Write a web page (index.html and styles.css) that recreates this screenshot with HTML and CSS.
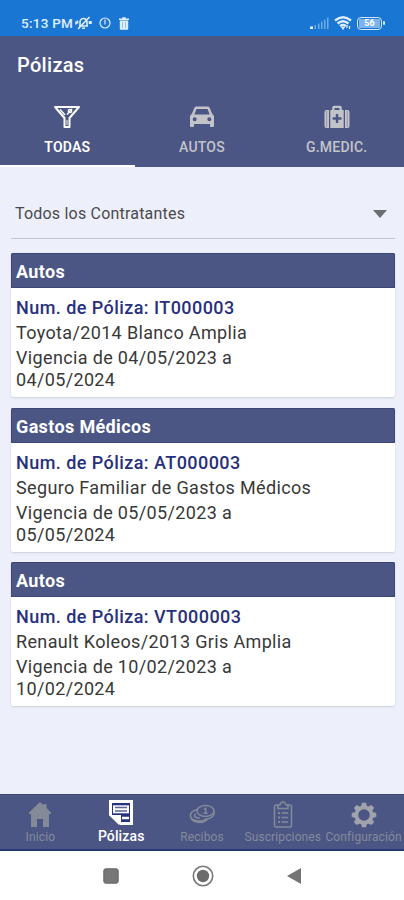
FILE: index.html
```html
<!DOCTYPE html>
<html lang="es">
<head>
<meta charset="utf-8">
<title>Pólizas</title>
<link rel="stylesheet" href="styles.css">
</head>
<body>
<div class="status">
  <span class="time">5:13 PM</span>
  <svg class="mute" width="17" height="14" viewBox="0 0 17 14" fill="none" stroke="currentColor" stroke-width="1.6"><path d="M4 10h9M5 10V6a3.500 3.500 0 0 1 7 0v4M7 12.300h3M14.500 1L3 13M1 5.500v3M16 5v3M2.500 4.500v3M14.500 5v3"/></svg>
  <svg class="alarm" width="12" height="12" viewBox="0 0 12 12" fill="none" stroke="currentColor" stroke-width="1.2"><circle cx="6" cy="6" r="5"/><path d="M6 2.500v5"/></svg>
  <svg class="trash" width="10" height="13" viewBox="0 0 10 13" fill="currentColor"><path d="M0 1.500h3L3.500.3h3L7 1.500h3V3H0zM.8 3.600h8.400V12q0 .8-.8.8H1.600q-.8 0-.8-.8z"/><path d="M3.500 5v6M6.500 5v6" stroke="#7bb3ea" stroke-width=".7"/></svg>
  <svg class="signal" width="19" height="13" viewBox="0 0 19 13" fill="#6faae5"><path d="M0 12V9.500h3V12z" fill="#e8f2ff"/><path d="M4.500 8H6v4H4.500zM8 6.500h1.500V12H8zM11 4.500h1.500V12H11zM14 2.500h1.500V12H14zM17 .5h1.500V12H17z"/></svg>
  <svg class="wifi" width="18" height="14" viewBox="0 0 18 14" fill="none" stroke="currentColor" stroke-width="2.300"><path d="M1 4.500q8-6.500 16 0M3.500 7.500q5.500-4.500 11 0M6 10.200q3-2.400 6 0"/><path d="M8 11.500h2L9 13zM13 9v3M15.500 10v3" stroke-width="1.300"/></svg>
  <span class="battery"><span class="level">56</span></span>
</div>
<header class="appbar">
  <h1>Pólizas</h1>
  <nav class="tabs">
    <a class="tab active">
      <svg width="28" height="24" viewBox="0 0 28 24" fill="none" stroke="currentColor" stroke-width="2"><path d="M2 2h24l-9.500 11v9h-5v-9z" stroke-linejoin="round"/><path d="M7 4.500l5 5.500M19 4l-5 5.500" stroke-width="1.500"/><circle cx="17" cy="6" r="1.700" stroke-width="1.300"/><path d="M14 15v5" stroke-width="1"/></svg>
      <span>TODAS</span>
    </a>
    <a class="tab">
      <svg width="26" height="24" viewBox="0 0 26 24" fill="currentColor" fill-rule="evenodd"><path d="M5.500 2.500Q6 1.500 7.500 1.500h11q1.500 0 2 1L23 8.500l2 2.500v10q0 1-1 1h-2q-1 0-1-1v-2H5v2q0 1-1 1H2q-1 0-1-1V11l2-2.500zM7.500 4L5.300 9.500h15.400L18.500 4zM5.700 12.200a2 2 0 1 0 0 4 2 2 0 0 0 0-4zM20.300 12.200a2 2 0 1 0 0 4 2 2 0 0 0 0-4z"/></svg>
      <span>AUTOS</span>
    </a>
    <a class="tab">
      <svg width="26" height="24" viewBox="0 0 26 24" fill="currentColor" fill-rule="evenodd"><path d="M6.300 5h1.900V2.500Q8.200.8 10 .8h6q1.800 0 1.800 1.700V5h1.900v18H6.300zM10.500 3v2h5V3zM11.800 9v3.200H8.600v2.500h3.200v3.200h2.500v-3.200h3.200v-2.500h-3.200V9z"/><path d="M5 5v18H2.500Q.5 23 .5 21V7q0-2 2-2zM21 5h2.500q2 0 2 2v14q0 2-2 2H21z"/><path d="M2.700 6v16M23.300 6v16" stroke="#7f84a1" stroke-width=".7"/></svg>
      <span>G.MEDIC.</span>
    </a>
  </nav>
</header>
<main>
  <div class="select"><span>Todos los Contratantes</span><i class="caret"></i></div>
  <section class="card">
    <h2>Autos</h2>
    <div class="body">
      <h3>Num. de Póliza: IT000003</h3>
      <p class="desc">Toyota/2014 Blanco Amplia</p>
      <p class="dates">Vigencia de 04/05/2023 a<br>04/05/2024</p>
    </div>
  </section>
  <section class="card">
    <h2>Gastos Médicos</h2>
    <div class="body">
      <h3>Num. de Póliza: AT000003</h3>
      <p class="desc">Seguro Familiar de Gastos Médicos</p>
      <p class="dates">Vigencia de 05/05/2023 a<br>05/05/2024</p>
    </div>
  </section>
  <section class="card">
    <h2>Autos</h2>
    <div class="body">
      <h3>Num. de Póliza: VT000003</h3>
      <p class="desc">Renault Koleos/2013 Gris Amplia</p>
      <p class="dates">Vigencia de 10/02/2023 a<br>10/02/2024</p>
    </div>
  </section>
</main>
<nav class="bottom">
  <a class="item">
    <svg width="24" height="28" viewBox="0 0 24 28" fill="currentColor"><path d="M12 1l3.500 3.200V3h3v4L23 11.500V13h-2v13h-6v-8H9v8H3V13H1v-1.500z"/></svg>
    <span>Inicio</span>
  </a>
  <a class="item active">
    <svg width="26" height="28" viewBox="0 0 26 28"><path d="M1 1h24v25H12L1 16z" fill="#fff"/><path d="M4 4h18v19h-9v-7H4z" fill="#26347f"/><path d="M5 6.300h16v8H5z" fill="#fff"/><path d="M7 8.500h12M7 12h12" stroke="#5a659a" stroke-width="1.300"/><path d="M14 19h7" stroke="#fff" stroke-width="2.500"/><path d="M1 16h10v10" fill="#fff"/></svg>
    <span>Pólizas</span>
  </a>
  <a class="item">
    <svg width="26" height="28" viewBox="0 0 26 28" fill="none" stroke="currentColor" stroke-width="1.500"><ellipse cx="16.500" cy="10" rx="8.500" ry="5.500"/><path d="M25 10v3c-1 4-6 5-8.500 5M8.500 8.500C-.5 10.500 0 17 5 19c4 1.500 9 1 12-1M1.500 15c1 8 13 8 17 3M7 12.500c-3 2-1 5 4 4.500M15 8.500l1.700-1V12M14.500 12.300h4"/></svg>
    <span>Recibos</span>
  </a>
  <a class="item">
    <svg width="20" height="28" viewBox="0 0 20 28" fill="none" stroke="currentColor" stroke-width="1.500"><path d="M6 4H3Q1.500 4 1.500 6v18q0 2 1.500 2h14q1.500 0 1.500-2V6q0-2-1.500-2h-3M5 7.500V5q0-1 2-1.200Q8 1 10 1t3 2.800Q15 4 15 5v2.500zM8.500 12H15M8.500 16.500H15M8.500 21H15"/><path d="M5 12h2M5 16.500h2M5 21h2" stroke-width="2"/></svg>
    <span>Suscripciones</span>
  </a>
  <a class="item gear">
    <svg width="26" height="28" viewBox="-13 -14 26 28"><g fill="currentColor"><circle r="9.500"/><path id="tooth" d="M-3-8.500L-2-12.300h4L3-8.500V8.500L2 12.300h-4L-3 8.500z"/><use href="#tooth" transform="rotate(45)"/><use href="#tooth" transform="rotate(90)"/><use href="#tooth" transform="rotate(135)"/></g><circle r="5.800" fill="#4b5685"/></svg>
    <span>Configuración</span>
  </a>
</nav>
<div class="system">
  <svg width="16" height="16" viewBox="0 0 16 16"><rect x=".8" y=".8" width="14.400" height="14.400" rx="1.800" fill="#777" stroke="#666"/></svg>
  <svg width="22" height="22" viewBox="0 0 22 22"><circle cx="11" cy="11" r="9.700" fill="none" stroke="#777" stroke-width="1.600"/><circle cx="11" cy="11" r="6.200" fill="#6c6c6c"/></svg>
  <svg width="16" height="18" viewBox="0 0 16 18"><path d="M15 1v16L1 9z" fill="#747474"/></svg>
</div>
</body>
</html>
```
FILE: styles.css
```css
* { box-sizing: border-box; }
body { margin: 0; height: 900px; display: flex; flex-direction: column; background: #edf0fa; font-family: Roboto, sans-serif; overflow: hidden; }
h1, h2, h3, p { margin: 0; }
svg { display: block; flex: none; }

.status { height: 36px; flex: none; background: #1976d2; color: #e0eefc; display: flex; align-items: center; padding: 10px 22px 0 21px; }
.time { font-size: 13.500px; font-weight: 500; letter-spacing: .25px; white-space: nowrap; width: 54px; }
.alarm { margin-left: 7px; }
.trash { margin-left: 8px; }
.signal { margin-left: auto; }
.wifi { margin-left: 5px; }
.battery { margin-left: 5px; width: 25px; height: 13px; border: 1.5px solid #d4e7fb; border-radius: 4px; padding: 1px; display: flex; position: relative; }
.battery::after { content: ""; position: absolute; right: -4px; top: 3px; width: 2px; height: 4px; background: #d4e7fb; border-radius: 1px; }
.level { flex: 1; background: #7cb3ea; color: #fff; font-size: 9px; line-height: 8px; font-weight: 700; text-align: center; border-radius: 1px; }

.appbar { height: 131px; flex: none; background: #4b5685; color: #fff; display: flex; flex-direction: column; justify-content: space-between; }
h1 { font-size: 20px; font-weight: 500; line-height: 24px; padding: 17px 17px 0; letter-spacing: .3px; }
.tabs { display: grid; grid-template-columns: repeat(3, 1fr); height: 66px; }
.tab { display: flex; flex-direction: column; align-items: center; gap: 9px; padding-top: 4px; color: #c3c4c8; font-size: 14px; letter-spacing: .2px; line-height: 18px; font-weight: 500; border-bottom: 2px solid transparent; }
.tab.active { color: #fff; border-color: #fff; font-weight: 600; }

main { flex: 1; padding: 22px 9.500px 0 11px; display: flex; flex-direction: column; gap: 10.500px; }
.select { height: 50px; flex: none; margin-bottom: 3.500px; border-bottom: 1.500px solid #c3c6cf; display: flex; align-items: center; justify-content: space-between; padding: 0 8px 0 4px; font-size: 16px; letter-spacing: .2px; color: #4a4a4c; }
.caret { border: 7px solid transparent; border-top: 8px solid #6a6e70; border-bottom: 0; }
.card { height: 144px; flex: none; background: #fff; border-radius: 2px; box-shadow: 0 1px 2px #0002; overflow: hidden; }
h2 { height: 35px; background: #4b5685; border: 1px solid #3b467b; color: #fff; font-size: 18px; letter-spacing: .36px; line-height: 35px; font-weight: 700; padding-left: 4px; }
.body { padding: 8px 5px 0; font-size: 18px; letter-spacing: .35px; color: #383838; }
h3 { font-size: 18px; line-height: 24px; font-weight: 500; letter-spacing: .44px; color: #26307d; }
.desc { line-height: 26px; }
.dates { line-height: 22px; padding-top: 1px; }

.bottom { height: 57px; flex: none; background: #4b5685; border-top: 1px solid #3d4879; border-bottom: 2px solid #26387a; display: grid; grid-template-columns: repeat(5, 1fr); }
.item { display: flex; flex-direction: column; align-items: center; padding-top: 6px; color: #858a99; font-size: 12px; letter-spacing: .12px; line-height: 16px; white-space: nowrap; min-width: 0; }
.item.active { color: #fff; font-size: 14px; font-weight: 500; padding-top: 4px; gap: 1px; }
.item.gear svg { color: #a0a3ac; }
.system { height: 49px; flex: none; background: #fff; display: flex; align-items: center; justify-content: space-between; padding: 0 102px 0 103px; }
```
